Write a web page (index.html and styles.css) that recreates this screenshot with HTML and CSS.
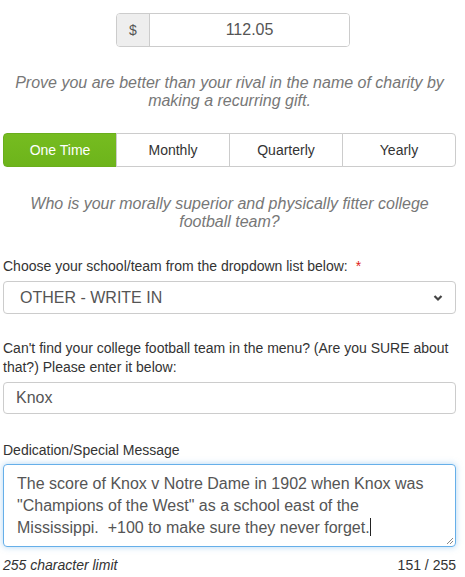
FILE: index.html
```html
<!DOCTYPE html>
<html lang="en">
<head>
  <meta charset="utf-8">
  <title>Donate</title>
  <meta name="viewport" content="width=device-width,initial-scale=1">
  <link rel="stylesheet" href="styles.css">
</head>
<body>
  <form class="gift">

    <!-- amount -->
    <div class="amount">
      <span class="addon">$</span>
      <input class="amount-input" type="text" value="112.05">
    </div>

    <p class="lead">Prove you are better than your rival in the name of charity by making a recurring gift.</p>

    <div class="freq">
      <button type="button" class="on">One Time</button>
      <button type="button">Monthly</button>
      <button type="button">Quarterly</button>
      <button type="button">Yearly</button>
    </div>

    <p class="lead q">Who is your morally superior and physically fitter college football team?</p>

    <label class="lbl">Choose your school/team from the dropdown list below: <span class="req">*</span></label>
    <div class="select">
      <span>OTHER - WRITE IN</span>
      <svg width="10" height="8" viewBox="0 0 10 8"><path d="M1.5 2 L5 5.5 L8.5 2" fill="none" stroke="#444" stroke-width="2.2"/></svg>
    </div>

    <label class="lbl two">Can't find your college football team in the menu? (Are you SURE about that?) Please enter it below:</label>
    <input class="field" type="text" value="Knox">

    <label class="lbl msg">Dedication/Special Message</label>
    <div class="area">The score of Knox v Notre Dame in 1902 when Knox was "Champions of the West" as a school east of the Mississippi.&nbsp; +100 to make sure they never forget.<span class="caret"></span>
      <svg class="grip" width="9" height="9" viewBox="0 0 9 9"><path d="M8 2 L2 8 M8 5 L5 8" stroke="#888" stroke-width="1"/></svg>
    </div>
    <div class="count">
      <em>255 character limit</em>
      <span>151 / 255</span>
    </div>
  </form>
</body>
</html>
```

FILE: styles.css
```css
* { box-sizing:border-box; }
body {
  margin:0; background:#fff; color:#333;
  font-family:"Liberation Sans", Arial, sans-serif; font-size:14px;
}

.gift { padding:13px 9px 0 3px; display:flex; flex-direction:column; }

/* AMOUNT */
.amount {
  display:flex; width:234px; height:34px; margin-left:113px;
  border:1px solid #ccc; border-radius:4px; overflow:hidden;
}
.addon {
  flex:none; width:33px; background:#eee; border-right:1px solid #ccc;
  display:flex; align-items:center; justify-content:center;
  color:#555; font-size:14px;
}
.amount-input {
  flex:1; min-width:0; border:none; outline:none; text-align:center;
  font:16px "Liberation Sans", Arial, sans-serif; color:#555;
}

/* TEXT */
.lead {
  margin:27px 0 0; text-align:center; font-style:italic;
  font-size:16px; line-height:18px; color:#777;
}
.lead.q { margin-top:28px; }

/* FREQUENCY */
.freq { display:flex; margin-top:23px; height:34px; }
.freq button {
  flex:1; background:#fff; color:#333;
  border:1px solid #ccc; margin-left:-1px;
  font:14px "Liberation Sans", Arial, sans-serif; padding:0;
}
.freq button:first-child { margin-left:0; border-radius:4px 0 0 4px; }
.freq button:last-child { border-radius:0 4px 4px 0; }
.freq button.on {
  background:linear-gradient(#76bc20,#6db41b); border-color:#6aae1c; color:#fff;
}

/* FIELDS */
.lbl { display:block; margin-top:25px; line-height:20px; }
.lbl.two { margin-top:25px; line-height:19px; }
.lbl.msg { margin-top:26px; }
.req { color:#e02020; margin-left:4px; }

.select, .field, .area {
  border:1px solid #ccc; border-radius:4px; color:#555; font-size:16px;
}
.select {
  margin-top:5px; height:33px; padding:0 12px 0 16px;
  display:flex; align-items:center; justify-content:space-between;
}
.field {
  margin-top:5px; height:32px; padding:0 12px;
  font-family:"Liberation Sans", Arial, sans-serif; outline:none;
}
.area {
  position:relative; margin-top:4px; height:83px;
  padding:8px 12px 0 13px; line-height:22px;
  border-color:#66afe9; box-shadow:0 0 6px rgba(102,175,233,.5);
}
.caret { display:inline-block; width:1px; height:18px; background:#222; vertical-align:-3px; }
.grip { position:absolute; right:1px; bottom:1px; }

.count {
  display:flex; justify-content:space-between;
  margin-top:8px; line-height:20px; color:#333;
}
```
